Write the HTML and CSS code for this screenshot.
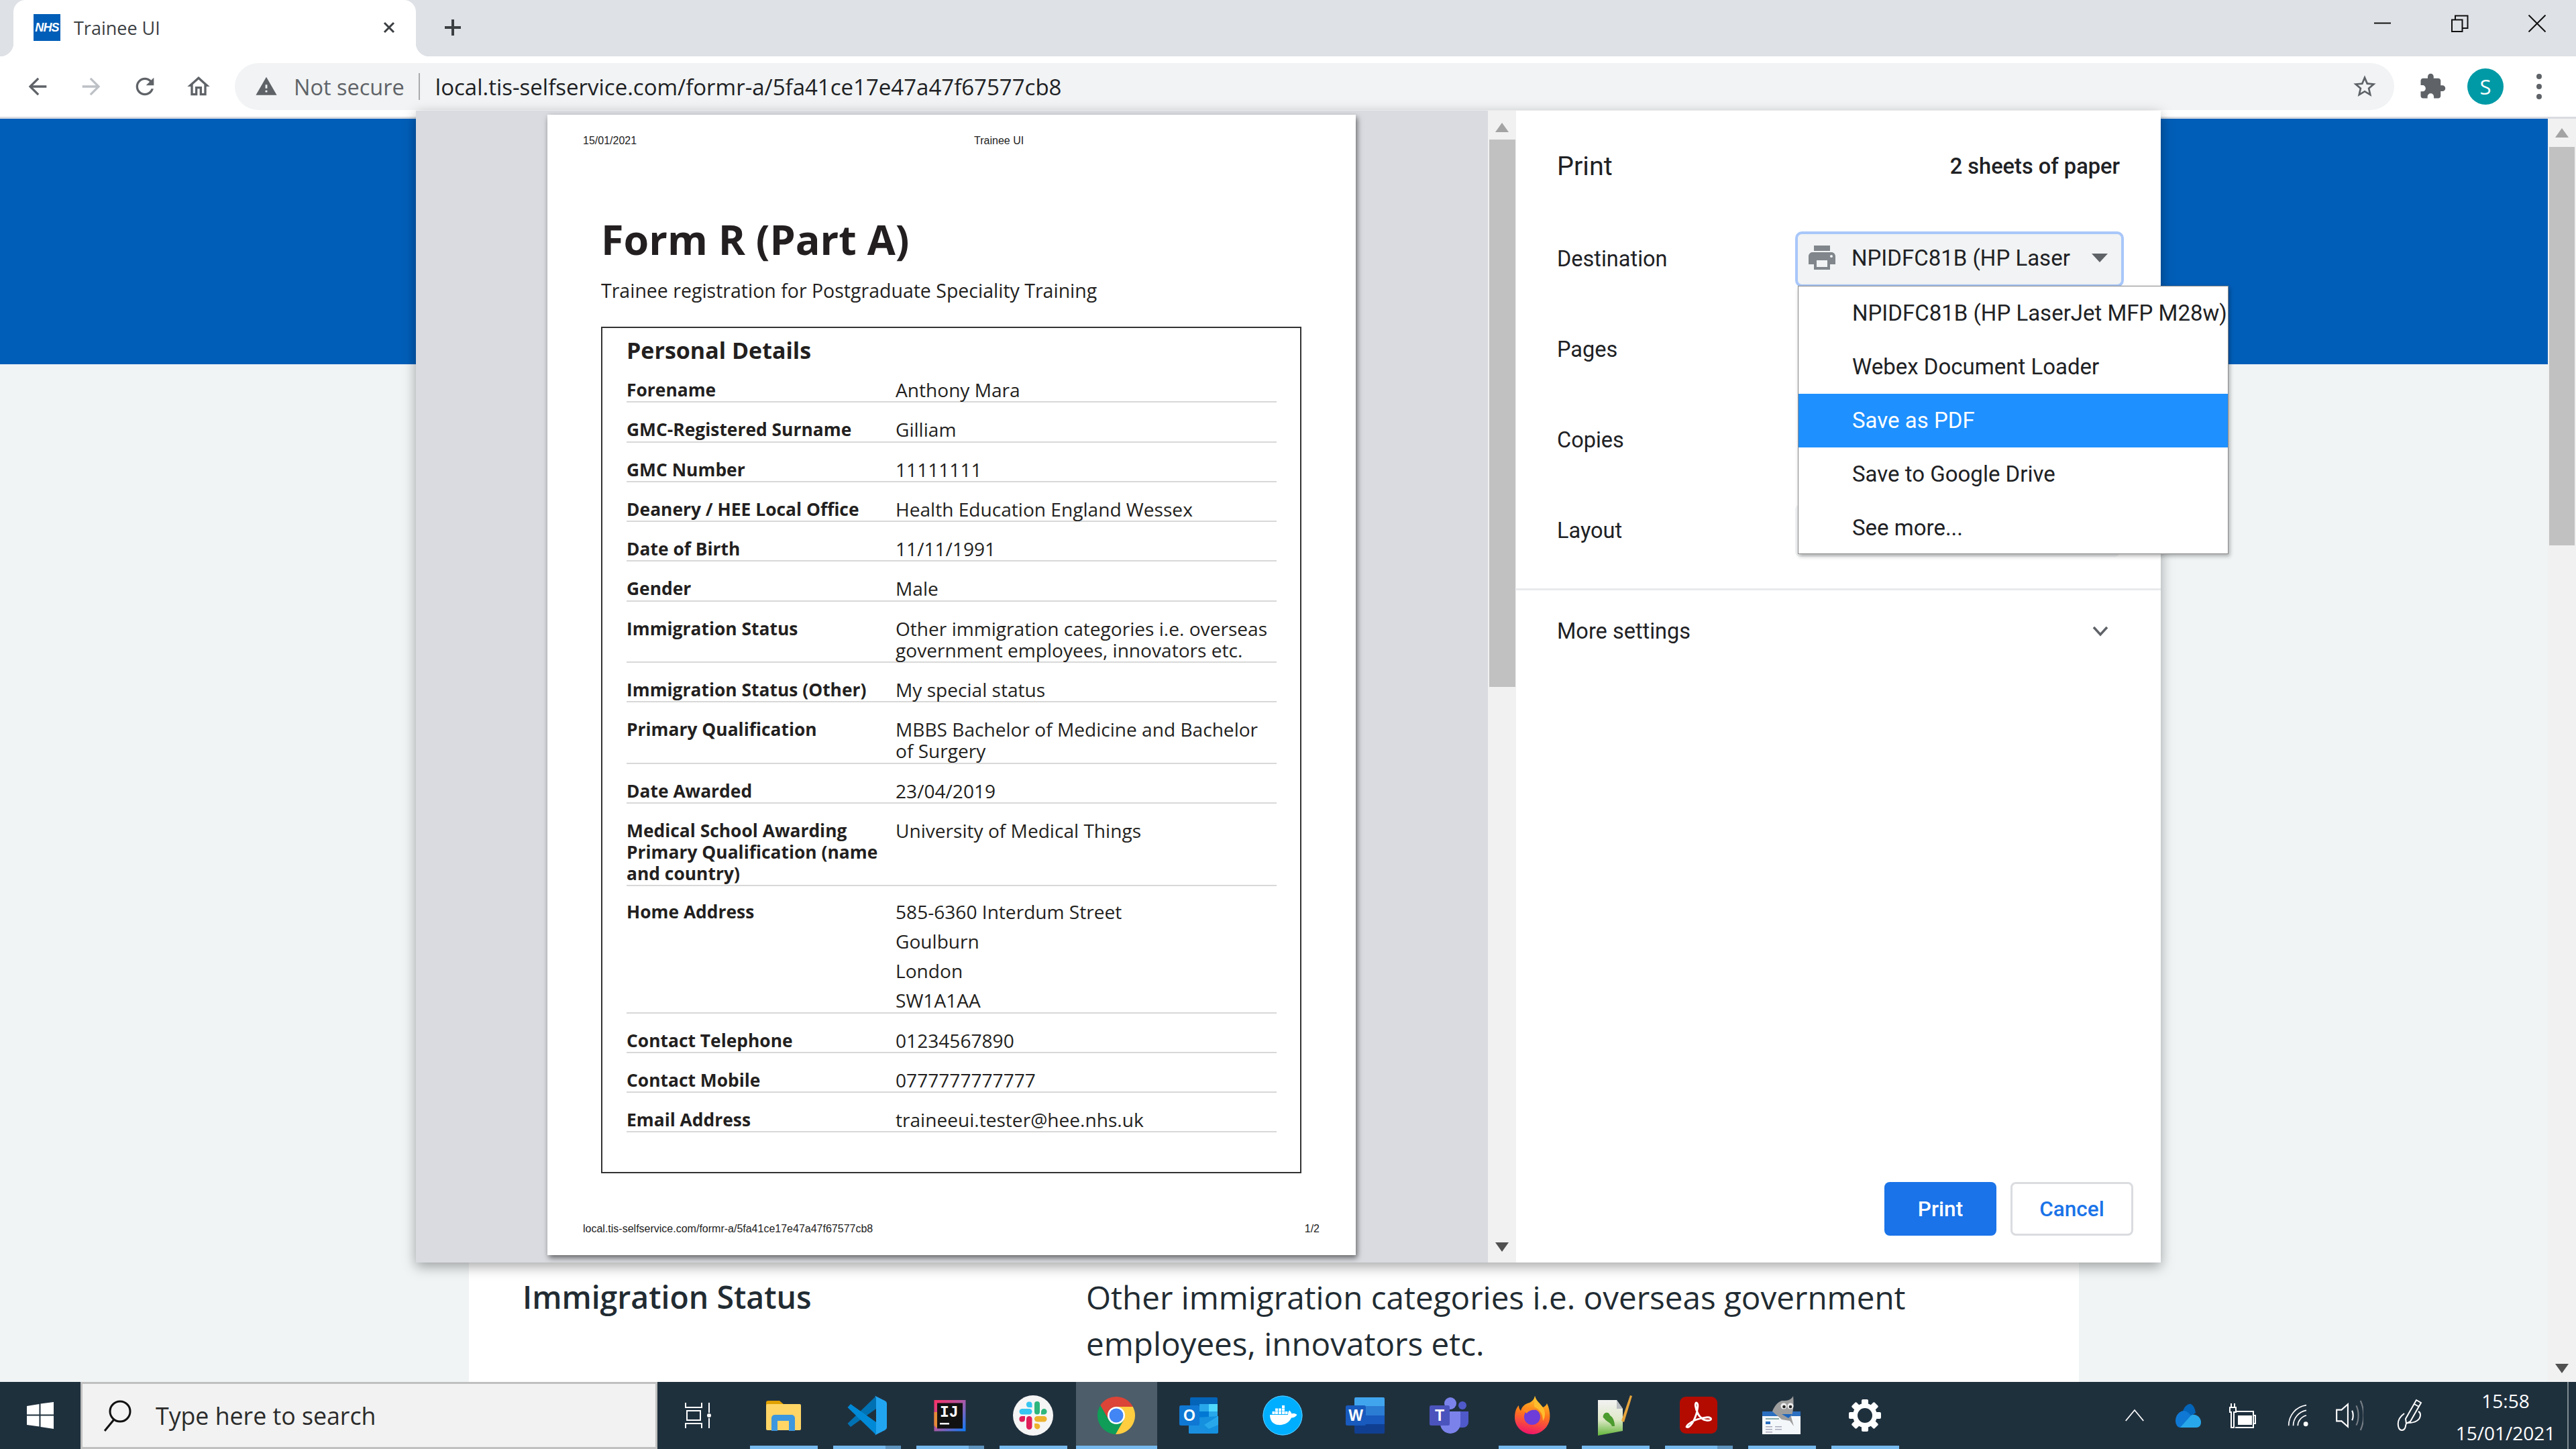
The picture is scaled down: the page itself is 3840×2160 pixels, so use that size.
FILE: index.html
```html
<!DOCTYPE html>
<html lang="en">
<head>
<meta charset="utf-8">
<title>Trainee UI</title>
<link rel="stylesheet" href="styles.css">
</head>
<body>
<div class="screen">
  <header class="tabstrip">
    <div class="tab">
      <span class="favicon">NHS</span>
      <span class="tab-title">Trainee UI</span>
      <svg class="tab-close" viewBox="0 0 20 20"><path d="M3 3L17 17M17 3L3 17"/></svg>
    </div>
    <svg class="new-tab" viewBox="0 0 30 30"><path d="M15 3V27M3 15H27"/></svg>
    <div class="win-controls">
      <svg class="win-btn" viewBox="0 0 26 26"><path d="M0 12.5H25"/></svg>
      <svg class="win-btn" viewBox="0 0 26 26"><path d="M1 7.5H16.5V25H1ZM6 7V1.5H24.5V20H17"/></svg>
      <svg class="win-btn" viewBox="0 0 26 26"><path d="M0.5 0.5L25.5 25.5M25.5 0.5L0.5 25.5"/></svg>
    </div>
  </header>

  <nav class="toolbar">
    <svg class="tool-icon" viewBox="0 0 24 24"><path d="M20 11H7.83l5.59-5.59L12 4l-8 8 8 8 1.41-1.41L7.83 13H20v-2z"/></svg>
    <svg class="tool-icon tool-off" viewBox="0 0 24 24"><path d="M4 11h12.17l-5.59-5.59L12 4l8 8-8 8-1.41-1.41L16.17 13H4v-2z"/></svg>
    <svg class="tool-icon" viewBox="0 0 24 24"><path d="M17.65 6.35C16.2 4.9 14.21 4 12 4c-4.42 0-7.99 3.58-7.99 8s3.57 8 7.99 8c3.73 0 6.84-2.55 7.73-6h-2.08c-.82 2.33-3.04 4-5.65 4-3.31 0-6-2.69-6-6s2.69-6 6-6c1.66 0 3.14.69 4.22 1.78L13 11h7V4l-2.35 2.35z"/></svg>
    <svg class="tool-icon" viewBox="0 0 24 24"><path d="M12 5.69l5 4.5V18h-2v-6H9v6H7v-7.81l5-4.5M12 3L2 12h3v8h6v-6h2v6h6v-8h3L12 3z"/></svg>
    <div class="omnibox">
      <svg class="warn-icon" viewBox="0 0 24 24"><path d="M1 21h22L12 2 1 21zm12-3h-2v-2h2v2zm0-4h-2v-4h2v4z"/></svg>
      <span class="not-secure">Not secure</span>
      <span class="omni-divider"></span>
      <span class="url">local.tis-selfservice.com/formr-a/5fa41ce17e47a47f67577cb8</span>
      <svg class="star-icon" viewBox="0 0 24 24"><path d="M22 9.24l-7.19-.62L12 2 9.19 8.63 2 9.24l5.46 4.73L5.82 21 12 17.27 18.18 21l-1.63-7.03L22 9.24zM12 15.4l-3.76 2.27 1-4.28-3.32-2.88 4.38-.38L12 6.1l1.71 4.04 4.38.38-3.32 2.88 1 4.28L12 15.4z"/></svg>
    </div>
    <svg class="puzzle-icon" viewBox="0 0 24 24"><path d="M20.5 11H19V7c0-1.1-.9-2-2-2h-4V3.5C13 2.12 11.88 1 10.5 1S8 2.12 8 3.5V5H4c-1.1 0-1.99.9-1.99 2v3.8H3.5c1.49 0 2.7 1.21 2.7 2.7s-1.21 2.7-2.7 2.7H2V20c0 1.1.9 2 2 2h3.8v-1.5c0-1.49 1.21-2.7 2.7-2.7 1.49 0 2.7 1.21 2.7 2.7V22H17c1.1 0 2-.9 2-2v-4h1.5c1.38 0 2.5-1.12 2.5-2.5S21.88 11 20.5 11z"/></svg>
    <span class="avatar">S</span>
    <svg class="menu-icon" viewBox="0 0 10 40"><circle cx="5" cy="5" r="4"/><circle cx="5" cy="20" r="4"/><circle cx="5" cy="35" r="4"/></svg>
  </nav>

  <div class="viewport">
    <main class="site">
      <div class="banner"></div>
      <div class="site-main">
        <section class="card">
          <div class="card-row">
            <strong class="card-label">Immigration Status</strong>
            <span class="card-value">Other immigration categories i.e. overseas government employees, innovators etc.</span>
          </div>
        </section>
      </div>
    </main>
    <div class="page-scroll">
      <span class="arrow-up arrow-page-up"></span>
      <span class="page-thumb"></span>
      <span class="arrow-down arrow-page-down"></span>
    </div>

    <div class="dialog">
      <div class="preview">
        <article class="sheet">
          <div class="sheet-head"><span>15/01/2021</span><span class="sheet-title">Trainee UI</span></div>
          <h1 class="form-title">Form R (Part A)</h1>
          <p class="form-sub">Trainee registration for Postgraduate Speciality Training</p>
          <section class="form-box">
            <h2 class="box-title">Personal Details</h2>
            <div class="row"><b>Forename</b><span>Anthony Mara</span></div>
            <div class="row"><b>GMC-Registered Surname</b><span>Gilliam</span></div>
            <div class="row"><b>GMC Number</b><span>11111111</span></div>
            <div class="row"><b>Deanery / HEE Local Office</b><span>Health Education England Wessex</span></div>
            <div class="row"><b>Date of Birth</b><span>11/11/1991</span></div>
            <div class="row"><b>Gender</b><span>Male</span></div>
            <div class="row"><b>Immigration Status</b><span>Other immigration categories i.e. overseas government employees, innovators etc.</span></div>
            <div class="row"><b>Immigration Status (Other)</b><span>My special status</span></div>
            <div class="row"><b>Primary Qualification</b><span>MBBS Bachelor of Medicine and Bachelor of Surgery</span></div>
            <div class="row"><b>Date Awarded</b><span>23/04/2019</span></div>
            <div class="row"><b>Medical School Awarding Primary Qualification (name and country)</b><span>University of Medical Things</span></div>
            <div class="row row-address"><b>Home Address</b><span class="address"><span>585-6360 Interdum Street</span><span>Goulburn</span><span>London</span><span>SW1A1AA</span></span></div>
            <div class="row"><b>Contact Telephone</b><span>01234567890</span></div>
            <div class="row"><b>Contact Mobile</b><span>0777777777777</span></div>
            <div class="row"><b>Email Address</b><span>traineeui.tester@hee.nhs.uk</span></div>
          </section>
          <div class="sheet-foot"><span>local.tis-selfservice.com/formr-a/5fa41ce17e47a47f67577cb8</span><span>1/2</span></div>
        </article>
      </div>
      <div class="preview-scroll">
        <span class="arrow-up arrow-prev-up"></span>
        <span class="preview-thumb"></span>
        <span class="arrow-down arrow-prev-down"></span>
      </div>
      <aside class="panel">
        <div class="panel-head"><span class="panel-title">Print</span><span class="sheets">2 sheets of paper</span></div>
        <div class="settings">
          <div class="setting">
            <span>Destination</span>
            <div class="select select-open">
              <svg class="printer" viewBox="0 0 24 24"><path d="M19 8H5c-1.66 0-3 1.34-3 3v6h4v4h12v-4h4v-6c0-1.66-1.34-3-3-3zm-3 11H8v-5h8v5zm3-7c-.55 0-1-.45-1-1s.45-1 1-1 1 .45 1 1-.45 1-1 1zm-1-9H6v4h12V3z"/></svg>
              <span class="select-text">NPIDFC81B (HP Laser</span>
              <span class="select-arrow"></span>
              <ul class="dropdown">
                <li>NPIDFC81B (HP LaserJet MFP M28w)</li>
                <li>Webex Document Loader</li>
                <li class="picked">Save as PDF</li>
                <li>Save to Google Drive</li>
                <li>See more...</li>
              </ul>
            </div>
          </div>
          <div class="setting"><span>Pages</span></div>
          <div class="setting"><span>Copies</span></div>
          <div class="setting"><span>Layout</span><span class="select-plain"></span></div>
        </div>
        <div class="more">
          <span>More settings</span>
          <svg class="chevron" viewBox="0 0 24 16"><path d="M2 2L12 13L22 2"/></svg>
        </div>
        <div class="actions">
          <button class="btn-print">Print</button>
          <button class="btn-cancel">Cancel</button>
        </div>
      </aside>
    </div>
  </div>

  <footer class="taskbar">
    <span class="start">
      <svg class="winlogo" viewBox="0 0 40 40"><path d="M0 6L18.5 3V18.5H0ZM20.5 2.5L40 0V18.5H20.5ZM0 20.5H18.5V36.5L0 34ZM20.5 20.5H40V40L20.5 37Z"/></svg>
    </span>
    <div class="search">
      <svg class="search-icon" viewBox="0 0 44 50"><circle cx="27" cy="19" r="15"/><path d="M18 31L4 48"/></svg>
      <span class="search-text">Type here to search</span>
    </div>
    <span class="taskview">
      <svg class="taskview-icon" viewBox="0 0 40 40"><path d="M2 1V8H26V1M2 39V32H26V39M4 13H24V27H4ZM37 1V16M37 24V39"/><circle cx="37" cy="20" r="2"/></svg>
    </span>

    <span class="app app-open">
      <svg class="app-icon" viewBox="0 0 60 60"><path fill="#e0a100" d="M4 11a3 3 0 0 1 3-3h17l7 6v8H4z"/><rect x="4" y="13" width="52" height="39" rx="2" fill="#ffd566"/><path fill="#3c97de" d="M12 53V34a5 5 0 0 1 5-5h25a5 5 0 0 1 5 5v19h-9V38H21v15z"/></svg>
    </span>
    <span class="app app-open app-stack">
      <svg class="app-icon" viewBox="0 0 60 60"><polygon fill="#0072b3" points="44,1 1.5,42 6,47 44,20"/><polygon fill="#0089d6" points="6,13 1.5,18 44,59 44,40"/><path fill="#22a5f1" d="M42 0.5L57 8Q60 9.5 60 12V48Q60 50.5 57 52L42 59.5Q44 58 44 55V5Q44 2 42 0.5Z"/></svg>
    </span>
    <span class="app app-open app-stack">
      <svg class="app-icon" viewBox="0 0 60 60"><defs><linearGradient id="ij" x1="0" y1="0" x2="1" y2="1"><stop offset="0" stop-color="#fe2f64"/><stop offset=".5" stop-color="#a75aa8"/><stop offset="1" stop-color="#087cfa"/></linearGradient></defs><rect x="6.5" y="7" width="47" height="46.5" fill="url(#ij)"/><polygon fill="#e58b35" points="6.5,25 11,25 11,49 6.5,45"/><rect x="11" y="11.5" width="38" height="38" fill="#111"/><text class="ij-text" x="15" y="32">IJ</text><rect x="15" y="41" width="14" height="2.5" fill="#fff"/></svg>
    </span>
    <span class="app app-open">
      <svg class="app-icon" viewBox="0 0 60 60"><circle cx="30" cy="30" r="30" fill="#f5f5f5"/><rect x="9.5" y="20" width="19" height="8.5" rx="4.2" fill="#36c5f0"/><path fill="#36c5f0" d="M28.5 18v-4.5a4.3 4.3 0 1 0-4.3 4.5z"/><rect x="32" y="9" width="8" height="19.5" rx="4" fill="#2eb67d"/><path fill="#2eb67d" d="M42 28.500h4a4.300 4.300 0 1 0-4-4.300z"/><rect x="20" y="31" width="8.500" height="20" rx="4.200" fill="#e01e5a"/><path fill="#e01e5a" d="M18 31h-4.500a4.300 4.300 0 1 0 4.500 4.300z"/><rect x="32" y="31" width="18.500" height="8.500" rx="4.200" fill="#ecb22e"/><path fill="#ecb22e" d="M32 42v4a4.200 4.200 0 1 0 4-4z"/></svg>
    </span>
    <span class="app app-open app-active">
      <svg class="app-icon" viewBox="0 0 60 60"><path fill="#db4437" d="M54.800 17A28 28 0 0 0 6.250 15L18.700 36.500L30 17Z"/><path fill="#0f9d58" d="M6.250 15A28 28 0 0 0 29 58L41.300 36.500L18.700 36.500Z"/><path fill="#ffcd40" d="M29 58A28 28 0 0 0 54.800 17L30 17L41.300 36.500Z"/><circle cx="30" cy="30" r="13" fill="#fff"/><circle cx="30" cy="30" r="10.500" fill="#4285f4"/></svg>
    </span>
    <span class="app">
      <svg class="app-icon" viewBox="0 0 60 60"><rect x="16" y="3" width="41" height="11" rx="2" fill="#0364b8"/><rect x="16" y="13" width="14" height="11" fill="#0364b8"/><rect x="30" y="13" width="14" height="11" fill="#28a8ea"/><rect x="44" y="13" width="13" height="11" fill="#50d9ff"/><rect x="16" y="24" width="14" height="11" fill="#0078d4"/><rect x="30" y="24" width="14" height="11" fill="#0078d4"/><rect x="44" y="24" width="13" height="11" fill="#28a8ea"/><path fill="#0a5a9e" d="M30 35h14v9L37 40z"/><path fill="#1490df" d="M14 34L58 31V55a2 2 0 0 1-2 2H16a2 2 0 0 1-2-2Z"/><path fill="#28a8ea" d="M58 31V44L44 50L37 44Z"/><path fill="#1a8fe0" d="M14 36L45 55V57H16a2 2 0 0 1-2-2Z"/><rect x="0" y="15" width="30" height="30" rx="2.500" fill="#0f78d4"/><text class="icon-letter" x="15" y="38">O</text></svg>
    </span>
    <span class="app">
      <svg class="app-icon" viewBox="0 0 60 60"><circle cx="30" cy="30" r="29.500" fill="#00aeff"/><circle cx="30" cy="30" r="29" fill="none" stroke="#5ecbff" stroke-width="1"/><path fill="#fff" d="M11 29H38C38 26 38.500 24 40 22.500C42 24 43 26 43.500 27.500C46 26.500 49 27 51.500 29C49.500 32 46 33.500 43 33.500C40 40.500 32 45 23 44C15 43 11 37 11 29Z"/><g fill="#fff"><rect x="29" y="15" width="4" height="4"/><rect x="19" y="19.500" width="4" height="4"/><rect x="24" y="19.500" width="4" height="4"/><rect x="29" y="19.500" width="4" height="4"/><rect x="14.500" y="24" width="4" height="4"/><rect x="19" y="24" width="4" height="4"/><rect x="24" y="24" width="4" height="4"/><rect x="29" y="24" width="4" height="4"/><rect x="33.500" y="24" width="4" height="4"/></g></svg>
    </span>
    <span class="app">
      <svg class="app-icon" viewBox="0 0 60 60"><path fill="#41a5ee" d="M15 3H56a2 2 0 0 1 2 2V16H13V5a2 2 0 0 1 2-2Z"/><rect x="13" y="16" width="45" height="14" fill="#2b7cd3"/><rect x="13" y="30" width="45" height="13" fill="#185abd"/><path fill="#103f91" d="M13 43H58V55a2 2 0 0 1-2 2H15a2 2 0 0 1-2-2Z"/><rect x="0" y="15" width="30" height="30" rx="2.500" fill="#185abd"/><text class="icon-letter" x="15" y="38">W</text></svg>
    </span>
    <span class="app">
      <svg class="app-icon" viewBox="0 0 60 60"><circle cx="50" cy="15" r="6" fill="#5059c9"/><path fill="#5059c9" d="M46 24H59V40a8 8 0 0 1-8 8H46Z"/><circle cx="32" cy="12" r="9" fill="#7b83eb"/><path fill="#7b83eb" d="M17 24H47V42a14.500 14.500 0 0 1-30 0Z"/><rect x="1" y="15" width="30" height="30" rx="2.500" fill="#4b53bc"/><text class="icon-letter icon-t" x="16" y="38">T</text></svg>
    </span>
    <span class="app app-open">
      <svg class="app-icon" viewBox="0 0 60 60"><defs><linearGradient id="fx" x1="0.6" y1="0" x2="0.4" y2="1"><stop offset="0" stop-color="#ffca2b"/><stop offset=".45" stop-color="#ff7a1a"/><stop offset="1" stop-color="#f0146a"/></linearGradient></defs><path fill="url(#fx)" d="M34 1C36 9 42 12 46 18C49 16 51 15 52 12C56 20 57 28 56 36C54 48 43 58 30 58C16 58 4 47 4 33C4 25 6 19 10 15C10 18 11 21 13 23C15 16 19 13 26 11C30 9 33 6 34 1Z"/><path fill="#ffbd2e" d="M34 1C36 9 42 12 46 18C50 24 50 32 46 38C46 26 40 20 33 17C33 12 33 7 34 1Z"/><circle cx="30" cy="32" r="12" fill="#6e3cd8"/><path fill="#ff8a1f" d="M16 22C21 18 30 18 36 22C30 21 24 23 22 27Z"/></svg>
    </span>
    <span class="app app-open">
      <svg class="app-icon" viewBox="0 0 60 60"><defs><linearGradient id="np" x1="0" y1="0" x2="0" y2="1"><stop offset="0" stop-color="#f2f2f2"/><stop offset=".55" stop-color="#dfe8c8"/><stop offset="1" stop-color="#62b53a"/></linearGradient></defs><path fill="url(#np)" d="M4 7H32L41 20V53L4 60Z"/><path fill="#b9bcc0" d="M32 7L41 20H32Z"/><path fill="#4b9b2e" d="M12 30C14 24 21 25 22 30C26 32 29 38 29 46L25 46C23 40 16 39 14 35C12 34 11 32 12 30Z"/><path fill="#e7a43a" d="M52 0L55 1L43 40L39 38Z"/></svg>
    </span>
    <span class="app app-open app-stack">
      <svg class="app-icon" viewBox="0 0 60 60"><rect x="2" y="2" width="56" height="55" rx="9" fill="#b30b00"/><path fill="none" stroke="#fff" stroke-width="2.800" d="M12 47C16 50 23 40 27 27C29 18 30 12 27 11C24 11 25 19 29 27C33 35 40 39 47 37C51 35 47 32 41 33C31 34 21 38 15 43C13 45 12 46 12 47Z"/></svg>
    </span>
    <span class="app app-open">
      <svg class="app-icon" viewBox="0 0 60 60"><rect x="1" y="24" width="57" height="34" fill="#f4f7fa"/><rect x="1" y="24" width="57" height="7" fill="#2a6fc0"/><rect x="6" y="34" width="20" height="2" fill="#8aa"/><rect x="6" y="39" width="7" height="4" fill="#2a6fc0"/><g fill="#aab"><rect x="6" y="46" width="10" height="1.500"/><rect x="20" y="46" width="10" height="1.500"/><rect x="6" y="50" width="10" height="1.500"/><rect x="20" y="50" width="10" height="1.500"/><rect x="6" y="54" width="10" height="1.500"/></g><path fill="#9d9d9d" d="M30 8C36 8 44 8 47 1C48 10 48 24 44 32L48 46L42 38L30 36C26 32 20 28 16 24C19 16 24 10 30 8Z"/><circle cx="33" cy="16" r="4.500" fill="#eee"/><circle cx="43" cy="16" r="4.500" fill="#eee"/><circle cx="33.500" cy="17" r="2.300" fill="#222"/><circle cx="43" cy="17" r="2.300" fill="#222"/><path fill="#1e66bd" d="M30 28L46 28L40 34Z"/></svg>
    </span>
    <span class="app app-open">
      <svg class="app-icon" viewBox="0 0 60 60"><g fill="#fff"><rect x="25" y="6" width="10" height="48" rx="2"/><rect x="25" y="6" width="10" height="48" rx="2" class="tooth45"/><rect x="25" y="6" width="10" height="48" rx="2" class="tooth90"/><rect x="25" y="6" width="10" height="48" rx="2" class="tooth135"/></g><circle cx="30" cy="30" r="14.500" fill="#1f303d" stroke="#fff" stroke-width="7"/></svg>
    </span>

    <div class="tray">
      <svg class="tray-icon tray-chevron" viewBox="0 0 34 22"><path d="M2 20L17 2L32 20"/></svg>
      <svg class="tray-icon tray-cloud" viewBox="0 0 40 40"><path fill="#0364b8" d="M12 14C14 6 20 2 24 3C28 5 30 10 31 16L20 24Z"/><path fill="#0f78d4" d="M1 28C1 20 6 14 13 13C18 13 22 17 25 22L15 38H8C4 38 1 33 1 28Z"/><path fill="#28a8ea" d="M8 38L24 20C30 16 39 22 39 30C39 34 37 38 32 38Z"/></svg>
      <svg class="tray-icon tray-battery" viewBox="0 0 40 40"><path d="M9 14H36V38H9M36 20H39V32H36M3 2V8M8 2V8M1 8H10V15H7V38H3V15H1Z"/><rect x="13" y="20" width="21" height="14" class="tray-fill"/></svg>
      <svg class="tray-icon tray-wifi" viewBox="0 0 40 40"><path d="M2 38C2 20 14 5 33 2M10 38C10 25 20 13 33 11M18 38C18 30 24 22 33 20"/><circle cx="32" cy="35" r="4" class="tray-fill"/></svg>
      <svg class="tray-icon tray-vol" viewBox="0 0 40 44"><path d="M2 14H9L18 6V38L9 30H2ZM24 15C26 19 26 25 24 29"/><path class="tray-dim" d="M30 8C34 16 34 28 30 36M36 1C42 14 42 30 36 43"/></svg>
      <svg class="tray-icon tray-pen" viewBox="0 0 40 50"><path d="M30 2L37 6L21 34L15 37L14 30ZM27 8L34 12M12 22C4 28 1 36 4 44C6 48 11 48 13 44C15 40 13 36 18 36C28 36 36 32 36 24C36 22 35 20 33 19"/></svg>
    </div>
    <div class="clock"><span>15:58</span><span>15/01/2021</span></div>
    <span class="show-desktop"></span>
  </footer>
</div>
</body>
</html>
```

FILE: styles.css
```css
* { box-sizing: border-box; }
html, body { margin: 0; padding: 0; overflow: hidden; }
body { width: 3840px; height: 2160px; font-family: "Open Sans", sans-serif; }
.screen { width: 3840px; height: 2160px; display: flex; flex-direction: column; overflow: hidden; background: #fff; }

/* tab strip */
.tabstrip { height: 84px; flex: none; display: flex; align-items: flex-start; background: #dee1e6; padding-left: 20px; }
.tab { position: relative; width: 600px; height: 84px; background: #fff; border-radius: 18px 18px 0 0; display: flex; align-items: center; padding: 0 30px 2px 30px; }
.tab::before, .tab::after { content: ""; position: absolute; bottom: 0; width: 20px; height: 20px; }
.tab::before { left: -20px; background: radial-gradient(circle at 0 0, #dee1e6 20px, #fff 20.5px); }
.tab::after { right: -20px; background: radial-gradient(circle at 100% 0, #dee1e6 20px, #fff 20.5px); }
.favicon { width: 40px; height: 40px; background: #005eb8; color: #fff; font: italic 700 18px/40px "Liberation Sans", sans-serif; text-align: center; letter-spacing: -.8px; }
.tab-title { margin-left: 20px; font-size: 27px; color: #3c4043; flex: 1; }
.tab-close { width: 20px; height: 20px; fill: none; stroke: #3c4043; stroke-width: 3; margin-right: 0; }
.new-tab { width: 30px; height: 30px; margin: 26px 0 0 40px; fill: none; stroke: #3c4043; stroke-width: 4; }
.win-controls { margin-left: auto; display: flex; gap: 89px; padding: 22px 45px 0 0; }
.win-btn { width: 26px; height: 26px; fill: none; stroke: #111; stroke-width: 2; }

/* toolbar */
.toolbar { height: 93px; flex: none; display: flex; align-items: center; background: #fff; border-bottom: 3px solid #d9dbe0; padding: 0 0 0 36px; }
.tool-icon { width: 40px; height: 40px; fill: #5f6368; margin-right: 40px; flex: none; }
.tool-off { fill: #bdc1c6; }
.omnibox { width: 3219px; height: 70px; margin-left: -6px; flex: none; background: #f1f3f4; border-radius: 35px; display: flex; align-items: center; padding: 0 20px 0 30px; }
.warn-icon { width: 34px; height: 34px; fill: #5f6368; flex: none; }
.not-secure { margin-left: 24px; font-size: 32.5px; color: #5f6368; }
.omni-divider { width: 2px; height: 40px; background: #a8abae; margin: 0 23px 0 21px; }
.url { font-size: 33px; color: #202124; flex: 1; }
.star-icon { width: 40px; height: 40px; fill: #5f6368; margin-right: 4px; }
.puzzle-icon { width: 42px; height: 42px; fill: #5f6368; margin-left: 36px; }
.avatar { width: 54px; height: 54px; border-radius: 50%; background: #009aa6; color: #fff; font-size: 31px; line-height: 54px; text-align: center; margin-left: 31px; }
.menu-icon { width: 10px; height: 40px; fill: #5f6368; margin-left: 48px; }

/* page behind */
.viewport { position: relative; flex: 1; display: flex; min-height: 0; }
.site { flex: 1; display: flex; flex-direction: column; min-width: 0; }
.banner { height: 366px; flex: none; background: #005eb8; }
.site-main { flex: 1; background: #f0f4f5; padding-left: 699px; }
.card { width: 2400px; height: 100%; background: #fff; padding: 1356px 0 0 80px; }
.card-row { display: flex; color: #212b32; font-size: 47.6px; line-height: 69px; }
.card-label { width: 840px; flex: none; font-weight: 600; font-size: 46.4px; }
.card-value { width: 1300px; }
.page-scroll { width: 42px; flex: none; background: #f1f1f1; display: flex; flex-direction: column; align-items: center; padding-top: 14px; }
.arrow-up { width: 0; height: 0; border-left: 10px solid transparent; border-right: 10px solid transparent; border-bottom: 14px solid #a3a3a3; }
.arrow-down { width: 0; height: 0; border-left: 10px solid transparent; border-right: 10px solid transparent; border-top: 14px solid #505050; margin-top: auto; }
.page-thumb { width: 38px; height: 594px; background: #c1c1c1; margin-top: 14px; }
.arrow-page-down { margin-bottom: 13px; }

/* print dialog */
.dialog { position: absolute; left: 620px; top: -12px; width: 2601px; height: 1717px; display: flex; box-shadow: 0 6px 18px rgba(0,0,0,.35); }
.preview { width: 1598px; flex: none; background: #d9dbe0; padding: 6px 0 0 196px; overflow: hidden; }
.sheet { width: 1205px; height: 1700px; background: #fff; box-shadow: 2px 4px 8px rgba(0,0,0,.55); color: #231f20; display: flex; flex-direction: column; }
.sheet-head { font: 16px/20px "Liberation Sans", sans-serif; padding: 29px 0 0 53px; display: flex; color: #222; }
.sheet-title { margin-left: 503px; }
.form-title { margin: 97px 0 0 80px; font-size: 61px; line-height: 80px; font-weight: 700; }
.form-sub { margin: 16px 0 0 80px; font-size: 28.5px; line-height: 40px; }
.form-box { margin: 34px 0 0 80px; width: 1044px; height: 1262px; border: 2px solid #333; padding: 13px 35px 0 36px; }
.box-title { margin: 0 0 -1px; font-size: 34px; line-height: 40px; font-weight: 700; }
.row { display: grid; grid-template-columns: 401px 1fr; padding: 24px 0 1.3px; border-bottom: 2px solid #d8d8d8; font-size: 28.1px; line-height: 32px; }
.row b { font-weight: 700; font-size: 26.4px; }
.row-address { padding-top: 22px; }
.address { display: flex; flex-direction: column; gap: 12px; }
.sheet-foot { margin-top: 73px; padding: 0 54px 0 53px; display: flex; justify-content: space-between; font: 16px/20px "Liberation Sans", sans-serif; color: #222; }
.preview-scroll { width: 42px; flex: none; background: #f1f1f1; display: flex; flex-direction: column; align-items: center; padding-top: 18px; }
.preview-thumb { width: 39px; height: 816px; background: #c1c1c1; margin-top: 11px; }
.arrow-prev-down { margin-bottom: 16px; }
.panel { flex: 1; position: relative; background: #fff; display: flex; flex-direction: column; font-family: Roboto, sans-serif; color: #202124; }
.panel-head { display: flex; justify-content: space-between; align-items: center; padding: 63px 61px 0 61px; height: 103px; }
.panel-title { font-size: 39.500px; line-height: 40px; }
.sheets { font-size: 32.6px; font-weight: 500; line-height: 40px; }
.settings { margin-top: 50.5px; padding: 0 55px 0 61px; }
.setting { height: 135px; display: flex; align-items: center; justify-content: space-between; font-size: 32.5px; }
.select { position: relative; width: 490px; height: 83px; border: 4px solid #a8c7fa; border-radius: 10px; background: #f1f3f4; display: flex; align-items: center; padding: 0 20px 4px 12px; }
.printer { width: 48px; height: 48px; fill: #80868b; flex: none; }
.select-text { margin-left: 20px; font-size: 33px; flex: 1; white-space: nowrap; }
.select-arrow { width: 0; height: 0; border-left: 12px solid transparent; border-right: 12px solid transparent; border-top: 13px solid #5f6368; }
.dropdown { position: absolute; left: 0; top: 77px; width: 642px; height: 400px; margin: 0; padding: 0; list-style: none; background: #fff; border: 1px solid #8a8a8a; box-shadow: 2px 3px 6px rgba(0,0,0,.3); z-index: 2; }
.dropdown li { height: 80px; line-height: 79px; padding-left: 80px; font-size: 33px; white-space: nowrap; }
.dropdown .picked { background: #1e90ff; color: #fff; }
.select-plain { width: 484px; height: 78px; background: #f1f3f4; border-radius: 8px; margin-right: 6px; }
.more { margin-top: 18px; border-top: 3px solid #e8eaed; height: 125px; display: flex; align-items: center; justify-content: space-between; padding: 0 78px 0 61px; font-size: 32.5px; }
.chevron { width: 24px; height: 16px; fill: none; stroke: #5f6368; stroke-width: 3.500; }
.actions { margin-top: auto; padding: 0 41px 40px 0; display: flex; justify-content: flex-end; gap: 21px; }
.actions button { height: 80px; border-radius: 8px; font: 500 31.500px Roboto, sans-serif; }
.btn-print { width: 167px; background: #1a73e8; color: #fff; border: 0; }
.btn-cancel { width: 183px; background: #fff; color: #1a73e8; border: 3px solid #dadce0; }

/* taskbar */
.taskbar { height: 100px; flex: none; display: flex; align-items: center; background: #1f303d; position: relative; }
.start { width: 120px; height: 100px; display: flex; align-items: center; justify-content: center; }
.winlogo { width: 40px; height: 40px; fill: #fff; }
.search { width: 860px; height: 100px; background: #f2f2f2; border: 3px solid #c0c0c0; display: flex; align-items: center; padding-left: 29px; }
.search-icon { width: 44px; height: 50px; fill: none; stroke: #111; stroke-width: 3; flex: none; }
.search-text { margin-left: 36px; font-size: 35.7px; color: #2b2b2b; }
.taskview { width: 126px; height: 100px; display: flex; align-items: center; padding-left: 40px; }
.taskview-icon { width: 40px; height: 40px; fill: #fff; stroke: #fff; stroke-width: 2; fill-rule: evenodd; }
.taskview-icon path { fill: none; }
.app { position: relative; width: 124px; height: 100px; display: flex; align-items: center; justify-content: center; flex: none; }
.app-icon { width: 60px; height: 60px; position: relative; }
.app-open::after { content: ""; position: absolute; left: 12px; right: 11px; bottom: 0; height: 5px; background: #76b9ed; }
.app-stack::after { background: linear-gradient(90deg, #76b9ed 77%, #5d93bd 77%, #5d93bd 100%); }
.app-active { background: linear-gradient(90deg, transparent 2px, #4d5d69 2px, #4d5d69 123px, transparent 123px); }
.app-active::after { left: 2px; right: 1px; }
.ij-text { font: 700 23px "Liberation Mono", monospace; fill: #fff; }
.icon-letter { font: 700 23px "Liberation Sans", sans-serif; fill: #fff; text-anchor: middle; }
.tooth45 { transform: rotate(45deg); transform-origin: 30px 30px; }
.tooth90 { transform: rotate(90deg); transform-origin: 30px 30px; }
.tooth135 { transform: rotate(135deg); transform-origin: 30px 30px; }
.tray { display: flex; align-items: center; margin-left: 325px; gap: 0; height: 100px; }
.tray-icon { fill: none; stroke: #fff; stroke-width: 2; flex: none; }
.tray-chevron { width: 30px; height: 20px; }
.tray-cloud { width: 40px; height: 40px; stroke: none; margin-left: 45px; }
.tray-battery { width: 40px; height: 40px; margin-left: 41px; }
.tray-wifi { width: 34px; height: 40px; margin-left: 47px; }
.tray-vol { width: 42px; height: 46px; margin-left: 37px; }
.tray-pen { width: 40px; height: 50px; margin-left: 49px; }
.tray-fill { fill: #fff; stroke: none; }
.tray-dim { stroke: #777f86; }
.clock { position: absolute; right: 30px; top: 2px; width: 150px; height: 100px; display: flex; flex-direction: column; align-items: center; justify-content: center; gap: 10px; color: #fff; font-size: 28px; line-height: 38px; }
.show-desktop { position: absolute; right: 11px; top: 0; width: 2px; height: 100px; background: #7f8a93; }
```
